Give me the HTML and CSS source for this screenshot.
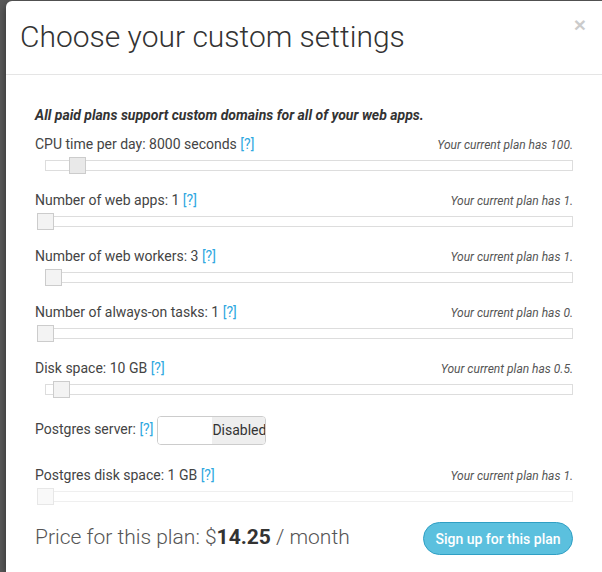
FILE: index.html
```html
<!DOCTYPE html>
<html>
<head>
<meta charset="utf-8">
<link rel="stylesheet" href="styles.css">
</head>
<body>
<div class="modal">
  <div class="modal-header">
    <h4 class="title">Choose your custom settings</h4>
    <span class="close">×</span>
  </div>
  <div class="modal-body">
    <p class="note">All paid plans support custom domains for all of your web apps.</p>

    <div class="row">
      <div class="row-head"><span class="label">CPU time per day: 8000 seconds <a class="help">[?]</a></span><span class="current">Your current plan has 100.</span></div>
      <div class="slider"><div class="handle active" style="left:23px"></div></div>
    </div>
    <div class="row">
      <div class="row-head"><span class="label">Number of web apps: 1 <a class="help">[?]</a></span><span class="current">Your current plan has 1.</span></div>
      <div class="slider"><div class="handle" style="left:-9px"></div></div>
    </div>
    <div class="row">
      <div class="row-head"><span class="label">Number of web workers: 3 <a class="help">[?]</a></span><span class="current">Your current plan has 1.</span></div>
      <div class="slider"><div class="handle" style="left:-1px"></div></div>
    </div>
    <div class="row">
      <div class="row-head"><span class="label">Number of always-on tasks: 1 <a class="help">[?]</a></span><span class="current">Your current plan has 0.</span></div>
      <div class="slider"><div class="handle" style="left:-9px"></div></div>
    </div>
    <div class="row">
      <div class="row-head"><span class="label">Disk space: 10 GB <a class="help">[?]</a></span><span class="current">Your current plan has 0.5.</span></div>
      <div class="slider"><div class="handle" style="left:7px"></div></div>
    </div>

    <div class="switch-row">
      <span class="label">Postgres server: <a class="help">[?]</a></span>
      <div class="switch"><span class="switch-handle"></span><span class="switch-off">Disabled</span></div>
    </div>

    <div class="row disabled">
      <div class="row-head"><span class="label">Postgres disk space: 1 GB <a class="help">[?]</a></span><span class="current">Your current plan has 1.</span></div>
      <div class="slider"><div class="handle" style="left:-9px"></div></div>
    </div>

    <div class="footer">
      <div class="price">Price for this plan: $<strong>14.25</strong> / month</div>
      <button class="btn-signup">Sign up for this plan</button>
    </div>
  </div>
</div>
</body>
</html>
```

FILE: styles.css
```css
html, body {
  margin: 0;
  height: 100%;
}
body {
  background: #5a5a5a;
  padding: 1px 0 0 6px;
  box-sizing: border-box;
  overflow: hidden;
  font-family: Roboto, "Liberation Sans", sans-serif;
  color: #444;
}
.modal {
  width: 596px;
  height: 100%;
  background: #fff;
  border-radius: 6px 0 0 0;
  box-shadow: 0 3px 9px rgba(0,0,0,0.5);
}
.modal-header {
  height: 73px;
  border-bottom: 1px solid #e5e5e5;
  padding: 0 16px 0 14px;
  display: flex;
  align-items: center;
  justify-content: space-between;
}
.title {
  margin: 0 0 1px 0;
  font-size: 30px;
  line-height: 1;
  font-weight: 300;
  color: #333;
}
.close {
  align-self: flex-start;
  margin-top: 13px;
  font-size: 21px;
  font-weight: bold;
  line-height: 1;
  color: #000;
  opacity: 0.2;
  font-family: "Liberation Sans", sans-serif;
}
.modal-body {
  padding: 30px 29px 0 29px;
}
.note {
  margin: 0 0 9px 0;
  height: 20px;
  line-height: 20px;
  font-size: 14px;
  font-weight: bold;
  font-style: italic;
  color: #333;
}
.row {
  height: 56px;
}
.row-head {
  display: flex;
  justify-content: space-between;
  align-items: baseline;
  height: 20px;
  line-height: 20px;
}
.label {
  font-size: 14px;
  color: #444;
}
.help {
  color: #2fa8df;
}
.current {
  font-size: 12px;
  font-style: italic;
  color: #555;
}
.slider {
  position: relative;
  margin: 6px 0 0 10px;
  height: 11px;
  border: 1px solid #ddd;
  box-sizing: border-box;
  background: #fff;
}
.handle {
  position: absolute;
  top: -4px;
  width: 17px;
  height: 17px;
  box-sizing: border-box;
  border: 1px solid #ccc;
  background: #f3f3f3;
}
.handle.active {
  background: #e9e9e9;
}
.switch-row {
  display: flex;
  align-items: center;
  margin-top: 2px;
  height: 29px;
  margin-bottom: 20px;
}
.switch-row .label {
  margin-top: -4px;
}
.switch {
  margin-left: 4px;
  display: flex;
  width: 109px;
  height: 29px;
  box-sizing: border-box;
  border: 1px solid #ccc;
  border-radius: 4px;
  overflow: hidden;
}
.switch-handle {
  flex: 0 0 54px;
  background: #fff;
}
.switch-off {
  flex: 1;
  background: #eee;
  font-size: 14px;
  color: #333;
  line-height: 27px;
  text-align: right;
}
.disabled .slider {
  opacity: 0.45;
}
.footer {
  display: flex;
  justify-content: space-between;
  align-items: center;
  margin-top: 1px;
}
.price {
  font-size: 21px;
  font-weight: 300;
  color: #555;
  margin-bottom: 3px;
}
.price strong {
  font-weight: bold;
  color: #333;
}
.btn-signup {
  width: 150px;
  height: 33px;
  border-radius: 17px;
  border: 1px solid #2f9fc4;
  background: #5bc0de;
  color: #fff;
  font-family: Roboto, "Liberation Sans", sans-serif;
  font-size: 14px;
  font-weight: 500;
  padding: 0;
}
```
